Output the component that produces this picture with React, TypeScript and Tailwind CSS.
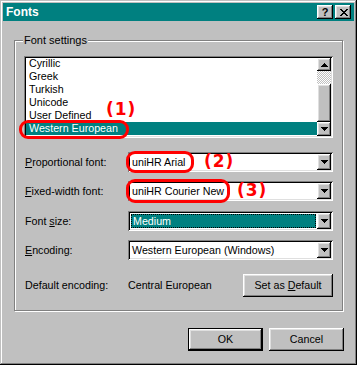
import React from 'react';

const raised =
  'shadow-[inset_-1px_-1px_#000,inset_1px_1px_#fff,inset_-2px_-2px_#808080,inset_2px_2px_#dfdfdf]';
const sunken =
  'shadow-[inset_1px_1px_#808080,inset_-1px_-1px_#fff,inset_2px_2px_#000,inset_-2px_-2px_#dfdfdf]';

const ArrowDown = () => (
  <svg width="7" height="4" viewBox="0 0 7 4" shapeRendering="crispEdges">
    <path d="M0 0h7v1H0z M1 1h5v1H1z M2 2h3v1H2z M3 3h1v1H3z" fill="#000" />
  </svg>
);

const ArrowUp = () => (
  <svg width="7" height="4" viewBox="0 0 7 4" shapeRendering="crispEdges">
    <path d="M3 0h1v1H3z M2 1h3v1H2z M1 2h5v1H1z M0 3h7v1H0z" fill="#000" />
  </svg>
);

const CloseGlyph = () => (
  <svg width="8" height="7" viewBox="0 0 8 7" shapeRendering="crispEdges">
    <path
      d="M0 0h2v1H0z M6 0h2v1H6z M1 1h2v1H1z M5 1h2v1H5z M2 2h4v1H2z M3 3h2v1H3z M2 4h4v1H2z M1 5h2v1H1z M5 5h2v1H5z M0 6h2v1H0z M6 6h2v1H6z"
      fill="#000"
    />
  </svg>
);

const DropButton = () => (
  <div className={`flex h-full w-[14px] shrink-0 items-center justify-center bg-[#c0c0c0] ${raised}`}>
    <ArrowDown />
  </div>
);

interface ComboProps {
  value: string;
  focused?: boolean;
}

const Combo: React.FC<ComboProps> = ({ value, focused }) => (
  <div className={`flex h-[20px] w-[205px] items-stretch bg-white p-[2px] ${sunken}`}>
    <div className="flex flex-1 items-stretch p-[1px]">
      {focused ? (
        <div className="flex flex-1 items-center border border-dotted border-[#000] bg-[#008080] pl-[1px] text-white">
          {value}
        </div>
      ) : (
        <div className="flex flex-1 items-center pl-[1px]">{value}</div>
      )}
    </div>
    <DropButton />
  </div>
);

const U = ({ children }: { children: React.ReactNode }) => (
  <span className="underline underline-offset-[1px]">{children}</span>
);

const listItems = ['Cyrillic', 'Greek', 'Turkish', 'Unicode', 'User Defined'];

export default function App() {
  return (
    <div
      className={`relative flex h-[365px] w-[357px] flex-col bg-[#c0c0c0] p-[3px] font-['Liberation_Sans',Arial,sans-serif] text-[10.7px] leading-none text-black shadow-[inset_-1px_-1px_#000,inset_1px_1px_#c0c0c0,inset_-2px_-2px_#808080,inset_2px_2px_#fff]`}
    >
      {/* title bar */}
      <div className="flex h-[18px] items-center bg-[#008080] pl-[3px] pr-[3px]">
        <span className="flex-1 text-[12px] font-bold text-white">Fonts</span>
        <div className="flex gap-[2px]">
          <div className={`flex h-[14px] w-[16px] items-center justify-center bg-[#c0c0c0] text-[11px] font-bold ${raised}`}>
            ?
          </div>
          <div className={`flex h-[14px] w-[16px] items-center justify-center bg-[#c0c0c0] pl-[1px] ${raised}`}>
            <CloseGlyph />
          </div>
        </div>
      </div>

      {/* group box */}
      <div className="relative ml-[11px] mt-[19px] h-[271px] w-[329px] border border-[#808080] pl-[9px] pt-[15px] shadow-[inset_1px_1px_#fff,1px_1px_#fff]">
        <span className="absolute -top-[7px] left-[8px] bg-[#c0c0c0] px-[1px] text-[11px] leading-[13px]">Font settings</span>

        {/* list box */}
        <div className={`flex h-[82px] w-[309px] bg-white p-[2px] ${sunken}`}>
          <div className="flex flex-1 flex-col overflow-hidden">
            <div className="-mt-[1px] flex flex-col">
              {listItems.map((item) => (
                <div key={item} className="h-[13px] pl-[3px] leading-[13px]">
                  {item}
                </div>
              ))}
              <div className="h-[13px] bg-[#008080] pl-[3px] leading-[13px] text-white">Western European</div>
            </div>
          </div>
          <div className="flex w-[14px] flex-col">
            <div className={`flex h-[13px] items-center justify-center bg-[#c0c0c0] ${raised}`}>
              <ArrowUp />
            </div>
            <div className="h-[13px] bg-[repeating-conic-gradient(#c0c0c0_0%_25%,#ffffff_0%_50%)] bg-[length:2px_2px]" />
            <div className={`h-[38px] bg-[#c0c0c0] ${raised}`} />
            <div className={`flex h-[14px] items-center justify-center bg-[#c0c0c0] ${raised}`}>
              <ArrowDown />
            </div>
          </div>
        </div>

        {/* fields */}
        <div className="mt-[14px] flex w-[309px] flex-col">
          <div className="flex items-center">
            <span className="w-[104px] pl-[1px]">
              <U>P</U>roportional font:
            </span>
            <Combo value="uniHR Arial" />
          </div>
          <div className="mt-[9px] flex items-center">
            <span className="w-[104px] pl-[1px]">
              <U>F</U>ixed-width font:
            </span>
            <Combo value="uniHR Courier New" />
          </div>
          <div className="mt-[10px] flex items-center">
            <span className="w-[104px] pl-[1px]">
              Font <U>s</U>ize:
            </span>
            <Combo value="Medium" focused />
          </div>
          <div className="mt-[9px] flex items-center">
            <span className="w-[104px] pl-[1px]">
              <U>E</U>ncoding:
            </span>
            <Combo value="Western European (Windows)" />
          </div>
          <div className="mt-[14px] flex items-center">
            <span className="w-[104px] pl-[1px]">Default encoding:</span>
            <span>Central European</span>
            <button className={`ml-auto flex h-[23px] w-[90px] items-center justify-center bg-[#c0c0c0] ${raised}`}>
              <span>
                Set as <U>D</U>efault
              </span>
            </button>
          </div>
        </div>
      </div>

      {/* dialog buttons */}
      <div className="mt-[17px] flex justify-end gap-[6px] pr-[10px]">
        <button className="flex h-[23px] w-[75px] border border-black bg-[#c0c0c0]">
          <span className={`flex flex-1 items-center justify-center ${raised}`}>OK</span>
        </button>
        <button className={`flex h-[23px] w-[75px] items-center justify-center bg-[#c0c0c0] ${raised}`}>
          Cancel
        </button>
      </div>

      {/* red annotations */}
      <div className="absolute left-[19px] top-[120px] h-[19px] w-[110px] rounded-[9px] border-[3px] border-[#ff0000]" />
      <div className="absolute left-[126px] top-[151px] h-[22px] w-[68px] rounded-[9px] border-[3px] border-[#ff0000]" />
      <div className="absolute left-[126px] top-[179px] h-[24px] w-[104px] rounded-[9px] border-[3px] border-[#ff0000]" />
      <span className="absolute left-[106px] top-[99px] font-['DejaVu_Sans',sans-serif] text-[17px] font-bold leading-[20px] tracking-[1px] text-[#ff0000]">
        (1)
      </span>
      <span className="absolute left-[204px] top-[151px] font-['DejaVu_Sans',sans-serif] text-[17px] font-bold leading-[20px] tracking-[1px] text-[#ff0000]">
        (2)
      </span>
      <span className="absolute left-[237px] top-[180px] font-['DejaVu_Sans',sans-serif] text-[17px] font-bold leading-[20px] tracking-[1px] text-[#ff0000]">
        (3)
      </span>
    </div>
  );
}
